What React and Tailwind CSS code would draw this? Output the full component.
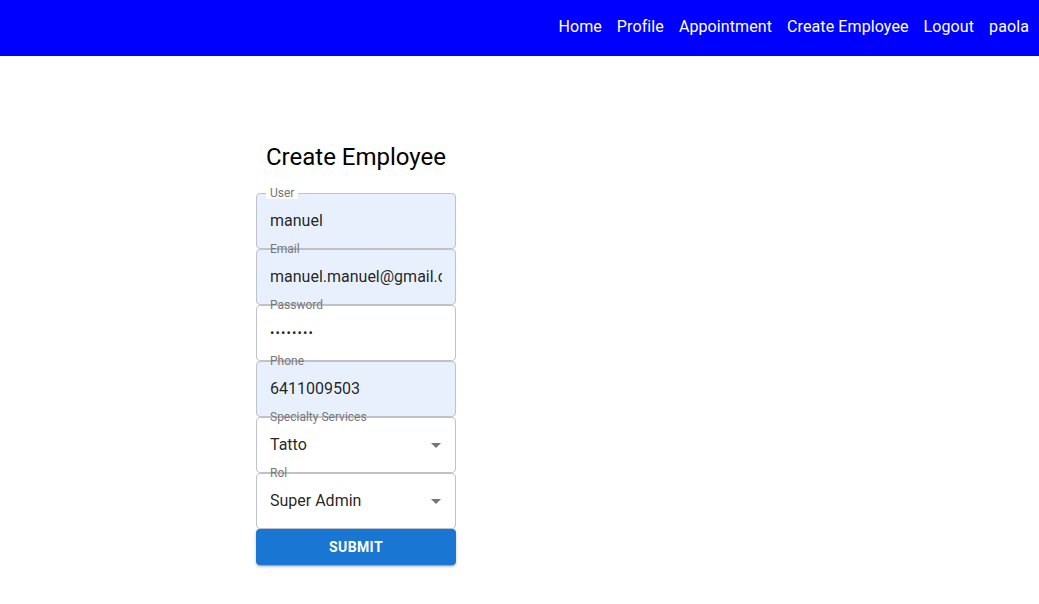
const fields = [
  { label: 'User', value: 'manuel', filled: true },
  { label: 'Email', value: 'manuel.manuel@gmail.com', filled: true },
  { label: 'Password', value: '••••••••', password: true },
  { label: 'Phone', value: '6411009503', filled: true },
  { label: 'Specialty Services', value: 'Tatto', select: true },
  { label: 'Rol', value: 'Super Admin', select: true },
];

const ArrowDropDown = () => (
  <svg viewBox="0 0 24 24" className="w-6 h-6 fill-[#757575]">
    <path d="M7 10l5 5 5-5z" />
  </svg>
);

const Field = ({ field, first }) => (
  <div
    className={`relative h-[56px] rounded-[4px] border border-[#bfc3c9] ${
      field.filled ? 'bg-[#e8f0fe]' : 'bg-white'
    }`}
  >
    <span
      className={`absolute left-[9px] top-[-7px] px-[4px] text-[12px] leading-[12px] text-[#777] ${
        first ? 'bg-white' : ''
      }`}
    >
      {field.label}
    </span>
    <div className="flex items-center h-full pl-[13px] pr-[13px]">
      <div
        className={`flex-1 overflow-hidden whitespace-nowrap text-[rgba(0,0,0,0.87)] ${
          field.password ? 'text-[13px] tracking-[1.1px] leading-[16px]' : 'text-[16px]'
        }`}
      >
        {field.value}
      </div>
      {field.select && (
        <div className="mr-[-6px]">
          <ArrowDropDown />
        </div>
      )}
    </div>
  </div>
);

export default function App() {
  return (
    <div className="min-h-screen bg-white font-['Roboto',sans-serif]">
      <nav className="h-[56px] bg-[#0000ff] flex items-center justify-end pr-[10px] pb-[2px]">
        <ul className="flex gap-[15px] text-white text-[16px] tracking-[0.1px]">
          <li>Home</li>
          <li>Profile</li>
          <li>Appointment</li>
          <li>Create Employee</li>
          <li>Logout</li>
          <li>paola</li>
        </ul>
      </nav>

      <div className="ml-[256px] w-[200px] pt-[85px]">
        <h2 className="text-[24px] leading-[32px] text-black text-center mb-[20px]">
          Create Employee
        </h2>
        <form>
          {fields.map((f, i) => (
            <Field key={f.label} field={f} first={i === 0} />
          ))}
          <button
            type="button"
            className="w-full h-[36px] rounded-[4px] bg-[#1976d2] text-white text-[14px] font-bold tracking-[0.4px] shadow-[0_3px_1px_-2px_rgba(0,0,0,0.2),0_2px_2px_0_rgba(0,0,0,0.14),0_1px_5px_0_rgba(0,0,0,0.12)]"
          >
            SUBMIT
          </button>
        </form>
      </div>
    </div>
  );
}
